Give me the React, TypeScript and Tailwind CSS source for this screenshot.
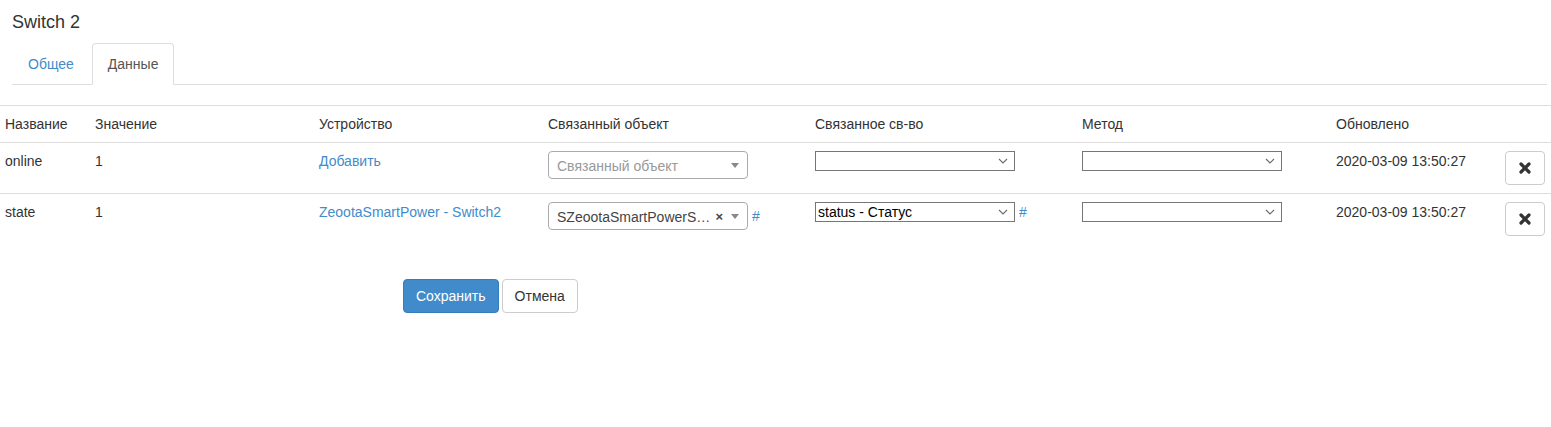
import React from 'react';

const cols = [90, 224, 229, 267, 267, 254, 169];

const Chevron = () => (
  <svg width="10" height="6" viewBox="0 0 10 6" className="shrink-0">
    <path d="M1 1 L5 5 L9 1" fill="none" stroke="#6b6b6b" strokeWidth="1.1" />
  </svg>
);

// plain browser select look
const NativeSelect = ({ value }: { value?: string }) => (
  <div className="flex h-[20px] w-[200px] items-center justify-between border border-[#767676] bg-white pl-[2px] pr-[6px] text-[14px] leading-[18px] text-black">
    <span>{value ?? ''}</span>
    <Chevron />
  </div>
);

// select2 style box
const Select2 = ({ value, placeholder }: { value?: string; placeholder?: string }) => (
  <div className="flex h-[28px] w-[200px] items-center rounded-[4px] border border-[#aaa] bg-white pl-[8px] pr-[8px]">
    <span className={`flex-1 truncate pt-[1px] leading-[26px] ${value ? 'text-[#444]' : 'text-[#999]'}`}>
      {value ?? placeholder}
    </span>
    {value && <span className="ml-[4px] mr-[8px] text-[13px] font-bold leading-none text-[#444]">×</span>}
    <span className="h-0 w-0 border-x-[4px] border-t-[5px] border-x-transparent border-t-[#888]" />
  </div>
);

const RemoveButton = () => (
  <button className="flex h-[34px] w-[40px] items-center justify-center rounded-[4px] border border-[#ccc] bg-white">
    <svg width="12" height="12" viewBox="0 0 12 12">
      <path d="M2 2 L10 10 M10 2 L2 10" stroke="#333" strokeWidth="3.2" strokeLinecap="round" />
    </svg>
  </button>
);

const Hash = () => <a className="ml-[4px] text-[#428bca]">#</a>;

const rows = [
  {
    name: 'online',
    value: '1',
    device: 'Добавить',
    object: null as string | null,
    prop: null as string | null,
    updated: '2020-03-09 13:50:27',
  },
  {
    name: 'state',
    value: '1',
    device: 'ZeootaSmartPower - Switch2',
    object: 'SZeootaSmartPowerSwitch2',
    prop: 'status - Статус',
    updated: '2020-03-09 13:50:27',
  },
];

export default function App() {
  return (
    <div
      className="min-h-[427px] bg-white text-[14px] leading-[20px] text-[#333]"
      style={{ fontFamily: '"Liberation Sans", Arial, Helvetica, sans-serif' }}
    >
      <h4 className="ml-[12px] pt-[12px] text-[18px] leading-[20px] font-normal">Switch 2</h4>

      <div className="ml-[12px] mr-[4px] mt-[11px] flex border-b border-[#ddd]">
        <a className="mb-[-1px] mr-[2px] rounded-t-[4px] border border-transparent px-[15px] py-[10px] text-[#428bca]">
          Общее
        </a>
        <a className="mb-[-1px] rounded-t-[4px] border border-[#ddd] border-b-white bg-white px-[15px] py-[10px] text-[#555]">
          Данные
        </a>
      </div>

      <table className="mt-[20px] w-full table-fixed border-collapse">
        <colgroup>
          {cols.map((w, i) => (
            <col key={i} style={{ width: w }} />
          ))}
          <col />
        </colgroup>
        <thead>
          <tr className="border-t border-[#ddd] text-left">
            {['Название', 'Значение', 'Устройство', 'Связанный объект', 'Связанное св-во', 'Метод', 'Обновлено', ''].map(
              (h, i) => (
                <th key={i} className="px-[5px] py-[8px] align-top font-normal">
                  {h}
                </th>
              )
            )}
          </tr>
        </thead>
        <tbody>
          {rows.map((r) => (
            <tr key={r.name} className="border-t border-[#ddd]">
              <td className="px-[5px] py-[8px] align-top">{r.name}</td>
              <td className="px-[5px] py-[8px] align-top">{r.value}</td>
              <td className="px-[5px] py-[8px] align-top">
                <a className="text-[#428bca]">{r.device}</a>
              </td>
              <td className="py-[8px] pl-[5px] pr-0 align-top">
                <div className="flex items-center">
                  <Select2 value={r.object ?? undefined} placeholder="Связанный объект" />
                  {r.object && <Hash />}
                </div>
              </td>
              <td className="px-[5px] py-[8px] align-top">
                <div className="flex items-center">
                  <NativeSelect value={r.prop ?? undefined} />
                  {r.prop && <Hash />}
                </div>
              </td>
              <td className="px-[5px] py-[8px] align-top">
                <NativeSelect />
              </td>
              <td className="px-[5px] py-[8px] align-top">{r.updated}</td>
              <td className="px-[5px] py-[8px] align-top">
                <RemoveButton />
              </td>
            </tr>
          ))}
        </tbody>
      </table>

      <div className="ml-[403px] mt-[35px] flex gap-[3px]">
        <button className="h-[34px] rounded-[4px] border border-[#357ebd] bg-[#428bca] px-[12px] text-white">
          Сохранить
        </button>
        <button className="h-[34px] rounded-[4px] border border-[#ccc] bg-white px-[12px] text-[#333]">
          Отмена
        </button>
      </div>
    </div>
  );
}
